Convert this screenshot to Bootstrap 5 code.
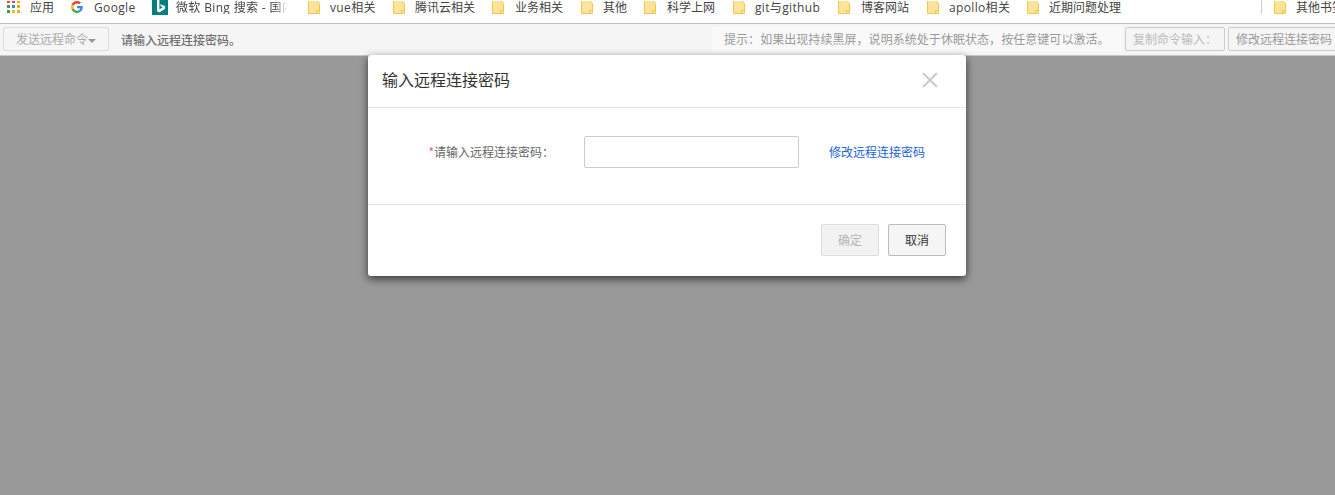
<!DOCTYPE html>
<html lang="zh-CN">
<head>
<meta charset="utf-8">
<title>输入远程连接密码</title>
<link rel="stylesheet" href="https://cdn.jsdelivr.net/npm/bootstrap@5.3.0/dist/css/bootstrap.min.css">
<style>
html,body{height:495px;overflow:hidden;margin:0}
body{font-family:"Noto Sans CJK SC","Noto Sans",sans-serif;font-size:12px;background:#999;color:#555;width:1335px}
.bm-bar{height:24px;background:#fff;border-bottom:1px solid #bdbdbd;padding:0 0 11px 7px;display:grid;grid-template-columns:64px 81px 156px 85px 99px 89px 63px 89px 105px 89px 100px 234px 13px 70px;align-items:center;overflow:hidden;white-space:nowrap;font-family:"Open Sans","Noto Sans CJK SC",sans-serif;font-size:12px;color:#444;line-height:13px}
.bm-item{display:flex;align-items:center;height:13px;overflow:visible}
.bm-ico{flex:0 0 auto;display:block}
.bm-lbl{margin-left:10px}
.bm-lat{letter-spacing:.35px}
.bm-nudge{margin-left:11px}
.bm-ico-apps{margin-right:0}
.bm-ico-g{margin-right:1px;margin-top:0}
.bm-ico-b{margin-top:1px;margin-right:-2px}
.bm-folder{margin-right:0}
.bm-clip{width:112px;overflow:hidden;-webkit-mask-image:linear-gradient(90deg,#000 88%,transparent);mask-image:linear-gradient(90deg,#000 88%,transparent)}
.bm-sep{width:1px;height:14px;background:#ccc}
.tool-bar{height:32px;background:#f5f5f5;border-bottom:1px solid #c8c8c8;display:flex;align-items:center;padding-left:3px;white-space:nowrap;overflow:hidden;position:relative}
.tool-btn{height:24px;line-height:22px;padding:0 6px;border:1px solid #ddd;border-radius:2px;background:#f5f5f5;color:#aaa;font-size:12px;flex:0 0 auto}
.tool-send{width:106px;padding:0 12px;margin-top:-1px}
.caret-mark{display:inline-block;border-top:4px solid #999;border-left:4px solid transparent;border-right:4px solid transparent;vertical-align:middle}
.tool-msg{margin-left:12px;font-weight:500;color:#707070;flex:1 1 auto}
.tool-hint{width:411px;height:25px;line-height:24px;background:#f9f9f9;border-radius:3px;color:#999;padding-left:12px;margin-right:2px;flex:0 0 auto;margin-top:-1px;letter-spacing:.05px}
.tool-copy{width:100px;margin-right:3px;padding:0 7px;color:#bbb;border-color:#ccc;margin-top:-1px}
.tool-edit{width:110px;padding:0 7px;color:#999;border-color:#ccc;margin-top:-1px;margin-right:-3px}
.dlg-wrap{position:relative;display:flex;justify-content:center;margin-top:-1px;padding-right:1px;z-index:5}
.dlg{width:598px;height:221px;background:#fff;border-radius:3px;box-shadow:0 3px 9px rgba(0,0,0,.65);display:flex;flex-direction:column}
.dlg-head{height:53px;border-bottom:1px solid #e5e5e5;display:flex;align-items:center;justify-content:space-between;padding:0 27px 2px 14px;flex:0 0 auto}
.dlg-title{font-size:16px;font-weight:400;margin:-2px 0 0;color:#333;line-height:1}
.dlg-body{height:97px;border-bottom:1px solid #e5e5e5;flex:0 0 auto;display:flex;align-items:flex-start;padding-top:28px}
.dlg-label{width:187px;text-align:right;line-height:31px;color:#666;flex:0 0 auto;padding-right:1px}
.req{color:#e4627f}
.dlg-input{width:215px;height:32px;margin-left:29px;border:1px solid #ccc;border-radius:2px;background:#fff;flex:0 0 auto;padding:0 8px}
.dlg-link{margin-left:30px;line-height:31px;color:#1a62d6;text-decoration:none}
.dlg-foot{flex:1 1 auto;display:flex;justify-content:flex-end;padding:19px 20px 0 0;gap:9px}
.dlg-btn{width:58px;height:32px;border-radius:2px;font-size:12px;padding:0;line-height:30px;background:#f5f5f5;color:#333;border:1px solid #bbb}
.dlg-btn:disabled{background:#f2f2f2;color:#b5b5b5;border-color:#ddd;opacity:1}
</style>
</head>
<body>
<svg width="0" height="0" class="position-absolute" aria-hidden="true"><defs><symbol id="fold" viewBox="0 0 12 13"><path d="M.5-1h7.500l3.500 3.500v10h-11z" fill="#fde49a" stroke="#f3c64d"/><path d="M8.500 12.500v-3h3" fill="none" stroke="#f3c64d"/></symbol></defs></svg>
<div class="bm-bar">
  <div class="bm-item">
    <svg class="bm-ico bm-ico-apps" width="13" height="13" viewBox="0 0 13 13"><rect x="0" y="-1" width="3" height="3" fill="#e8453c"/><rect x="5" y="-1" width="3" height="3" fill="#e8453c"/><rect x="10" y="-1" width="3" height="3" fill="#f4a90f"/><rect x="0" y="4" width="3" height="3" fill="#34a04f"/><rect x="5" y="4" width="3" height="3" fill="#2f8ee8"/><rect x="10" y="4" width="3" height="3" fill="#f4a90f"/><rect x="0" y="9" width="3" height="3" fill="#34a04f"/><rect x="5" y="9" width="3" height="3" fill="#f7b80f"/><rect x="10" y="9" width="3" height="3" fill="#f4a90f"/></svg>
    <span class="bm-lbl">应用</span>
  </div>
  <div class="bm-item">
    <svg class="bm-ico bm-ico-g" width="12" height="12" viewBox="0 0 48 48"><path fill="#EA4335" d="M24 9.500c3.500 0 6.700 1.200 9.200 3.600l6.900-6.900C35.900 2.400 30.400 0 24 0 14.600 0 6.500 5.400 2.600 13.200l8 6.200C12.500 13.600 17.800 9.500 24 9.500z"/><path fill="#4285F4" d="M47 24.500c0-1.600-.1-3.100-.4-4.500H24v9h12.900c-.6 3-2.200 5.500-4.700 7.200l7.700 6C44.400 38 47 31.800 47 24.500z"/><path fill="#FBBC05" d="M10.500 28.600c-.5-1.400-.8-3-.8-4.600s.3-3.200.8-4.600l-8-6.200C.9 16.500 0 20.100 0 24s.9 7.500 2.600 10.800l7.900-6.200z"/><path fill="#34A853" d="M24 48c6.500 0 11.900-2.100 15.900-5.800l-7.700-6c-2.200 1.400-4.900 2.300-8.200 2.300-6.200 0-11.500-4.200-13.400-9.800l-8 6.200C6.500 42.600 14.600 48 24 48z"/></svg>
    <span class="bm-lbl bm-lat">Google</span>
  </div>
  <div class="bm-item">
    <svg class="bm-ico bm-ico-b" width="16" height="15" viewBox="0 0 16 15"><rect width="16" height="15" fill="#00807a"/><path fill="#fff" d="M5 0h2.400v9.200l3.200-1.800-1.500-.7-1-2.400 5 1.700v2.700L7.400 12.500 5 11.200z"/></svg>
    <span class="bm-lbl bm-clip bm-lat">微软 Bing 搜索 - 国内版</span>
  </div>
  <div class="bm-item"><svg class="bm-ico bm-folder" width="12" height="13"><use href="#fold"/></svg><span class="bm-lbl bm-lat">vue相关</span></div>
  <div class="bm-item"><svg class="bm-ico bm-folder" width="12" height="13"><use href="#fold"/></svg><span class="bm-lbl">腾讯云相关</span></div>
  <div class="bm-item"><svg class="bm-ico bm-folder" width="12" height="13"><use href="#fold"/></svg><span class="bm-lbl bm-nudge">业务相关</span></div>
  <div class="bm-item"><svg class="bm-ico bm-folder" width="12" height="13"><use href="#fold"/></svg><span class="bm-lbl">其他</span></div>
  <div class="bm-item"><svg class="bm-ico bm-folder" width="12" height="13"><use href="#fold"/></svg><span class="bm-lbl bm-nudge">科学上网</span></div>
  <div class="bm-item"><svg class="bm-ico bm-folder" width="12" height="13"><use href="#fold"/></svg><span class="bm-lbl bm-lat">git与github</span></div>
  <div class="bm-item"><svg class="bm-ico bm-folder" width="12" height="13"><use href="#fold"/></svg><span class="bm-lbl bm-nudge">博客网站</span></div>
  <div class="bm-item"><svg class="bm-ico bm-folder" width="12" height="13"><use href="#fold"/></svg><span class="bm-lbl bm-lat">apollo相关</span></div>
  <div class="bm-item"><svg class="bm-ico bm-folder" width="12" height="13"><use href="#fold"/></svg><span class="bm-lbl">近期问题处理</span></div>
  <div class="bm-sep"></div>
  <div class="bm-item"><svg class="bm-ico bm-folder" width="12" height="13"><use href="#fold"/></svg><span class="bm-lbl">其他书签</span></div>
</div>
<div class="tool-bar">
  <button class="btn tool-btn tool-send" type="button">发送远程命令<span class="caret-mark"></span></button>
  <div class="tool-msg">请输入远程连接密码。</div>
  <div class="tool-hint">提示：如果出现持续黑屏，说明系统处于休眠状态，按任意键可以激活。</div>
  <button class="btn tool-btn tool-copy" type="button">复制命令输入：</button>
  <button class="btn tool-btn tool-edit" type="button">修改远程连接密码</button>
</div>
<div class="dlg-wrap">
  <div class="dlg" role="dialog">
    <div class="dlg-head">
      <h5 class="dlg-title">输入远程连接密码</h5>
      <svg width="18" height="18" viewBox="0 0 18 18" aria-label="关闭"><path d="M2 2l14 14M16 2L2 16" stroke="#ccc" stroke-width="2.200" fill="none"/></svg>
    </div>
    <div class="dlg-body">
      <label class="dlg-label"><span class="req">*</span>请输入远程连接密码：</label>
      <input class="dlg-input" type="password">
      <a class="dlg-link" href="#">修改远程连接密码</a>
    </div>
    <div class="dlg-foot">
      <button class="btn dlg-btn" type="button" disabled>确定</button>
      <button class="btn dlg-btn" type="button">取消</button>
    </div>
  </div>
</div>
<script src="https://cdn.jsdelivr.net/npm/bootstrap@5.3.0/dist/js/bootstrap.bundle.min.js"></script>
</body>
</html>
